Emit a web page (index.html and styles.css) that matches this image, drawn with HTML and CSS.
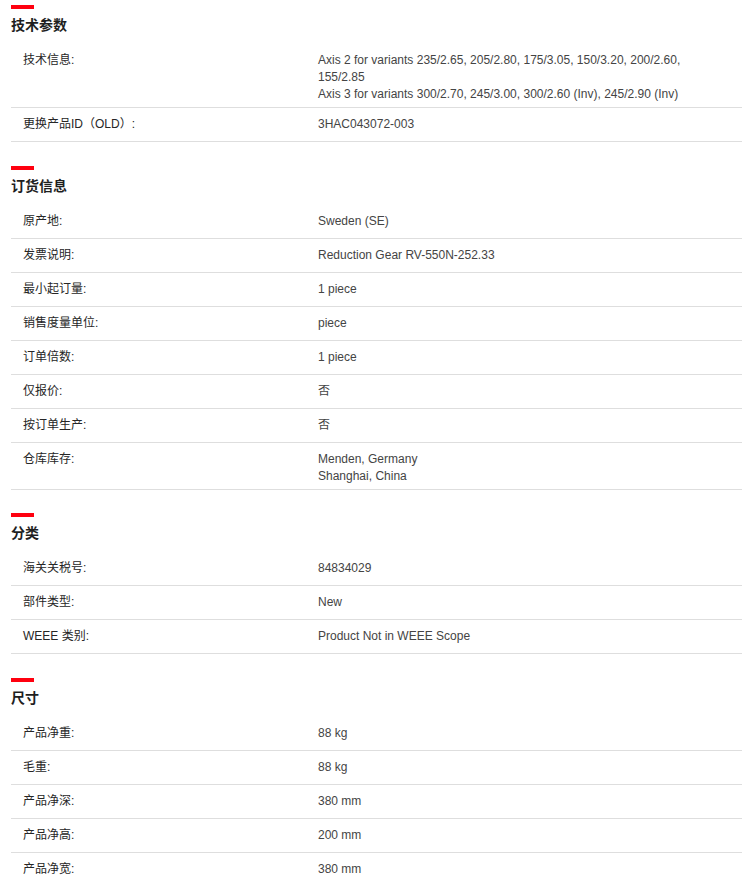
FILE: index.html
```html
<!DOCTYPE html>
<html lang="zh-CN">
<head>
  <meta charset="utf-8">
  <meta name="viewport" content="width=device-width, initial-scale=1">
  <link rel="stylesheet" href="styles.css">
  <title>产品参数</title>
</head>
<body>

<div class="specs">

  <!-- 技术参数 -->
  <div class="spec-section">
    <h2 class="spec-title">技术参数</h2>
    <div class="spec-row">
      <div class="spec-label">技术信息:</div>
      <div class="spec-value">Axis 2 for variants 235/2.65, 205/2.80, 175/3.05, 150/3.20, 200/2.60, 155/2.85<br>Axis 3 for variants 300/2.70, 245/3.00, 300/2.60 (Inv), 245/2.90 (Inv)</div>
    </div>
    <div class="spec-row">
      <div class="spec-label">更换产品ID（OLD）:</div>
      <div class="spec-value">3HAC043072-003</div>
    </div>
  </div>

  <!-- 订货信息 -->
  <div class="spec-section">
    <h2 class="spec-title">订货信息</h2>
    <div class="spec-row">
      <div class="spec-label">原产地:</div>
      <div class="spec-value">Sweden (SE)</div>
    </div>
    <div class="spec-row">
      <div class="spec-label">发票说明:</div>
      <div class="spec-value">Reduction Gear RV-550N-252.33</div>
    </div>
    <div class="spec-row">
      <div class="spec-label">最小起订量:</div>
      <div class="spec-value">1 piece</div>
    </div>
    <div class="spec-row">
      <div class="spec-label">销售度量单位:</div>
      <div class="spec-value">piece</div>
    </div>
    <div class="spec-row">
      <div class="spec-label">订单倍数:</div>
      <div class="spec-value">1 piece</div>
    </div>
    <div class="spec-row">
      <div class="spec-label">仅报价:</div>
      <div class="spec-value">否</div>
    </div>
    <div class="spec-row">
      <div class="spec-label">按订单生产:</div>
      <div class="spec-value">否</div>
    </div>
    <div class="spec-row">
      <div class="spec-label">仓库库存:</div>
      <div class="spec-value">Menden, Germany<br>Shanghai, China</div>
    </div>
  </div>

  <!-- 分类 -->
  <div class="spec-section">
    <h2 class="spec-title">分类</h2>
    <div class="spec-row">
      <div class="spec-label">海关关税号:</div>
      <div class="spec-value">84834029</div>
    </div>
    <div class="spec-row">
      <div class="spec-label">部件类型:</div>
      <div class="spec-value">New</div>
    </div>
    <div class="spec-row">
      <div class="spec-label">WEEE 类别:</div>
      <div class="spec-value">Product Not in WEEE Scope</div>
    </div>
  </div>

  <!-- 尺寸 -->
  <div class="spec-section">
    <h2 class="spec-title">尺寸</h2>
    <div class="spec-row">
      <div class="spec-label">产品净重:</div>
      <div class="spec-value">88 kg</div>
    </div>
    <div class="spec-row">
      <div class="spec-label">毛重:</div>
      <div class="spec-value">88 kg</div>
    </div>
    <div class="spec-row">
      <div class="spec-label">产品净深:</div>
      <div class="spec-value">380 mm</div>
    </div>
    <div class="spec-row">
      <div class="spec-label">产品净高:</div>
      <div class="spec-value">200 mm</div>
    </div>
    <div class="spec-row">
      <div class="spec-label">产品净宽:</div>
      <div class="spec-value">380 mm</div>
    </div>
  </div>

</div>

</body>
</html>
```

FILE: styles.css
```css
body {
  font-family: "Liberation Sans", "Noto Sans CJK SC", sans-serif;
  background-color: #fff;
  color: #222;
  margin: 0;
  padding: 0;
}
.specs {
  padding: 5px 0 0 11px;
}
.spec-section {
  margin-bottom: 23.5px;
}
.spec-title {
  font-size: 14px;
  font-weight: bold;
  line-height: 20px;
  color: #1f1f1f;
  margin: 0 0 9px;
}
.spec-title::before {
  content: "";
  display: block;
  width: 23px;
  height: 4px;
  background-color: #ff000f;
  margin-bottom: 6px;
}
.spec-row {
  display: grid;
  grid-template-columns: 295px 390px;
  padding: 8px 0 4px 12px;
  min-height: 21px;
  border-bottom: 1px solid #dedede;
  font-size: 12px;
  line-height: 17px;
}
.spec-label {
  color: #262626;
}
.spec-value {
  color: #444;
}
```
